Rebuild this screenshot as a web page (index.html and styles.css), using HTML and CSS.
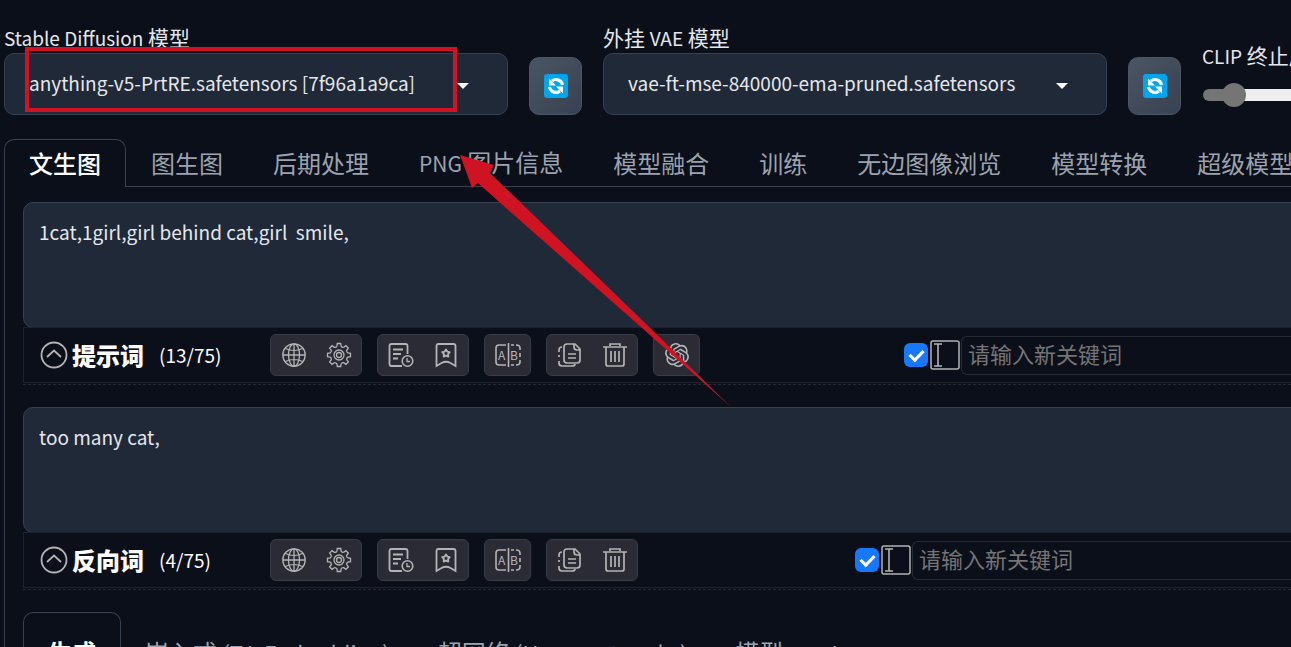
FILE: index.html
```html
<!DOCTYPE html>
<html lang="zh"><head><meta charset="utf-8"><title>Stable Diffusion</title><link rel="stylesheet" href="styles.css"></head>
<body>
<svg class="defs" aria-hidden="true">
<symbol id="refresh" viewBox="0 0 24 24"><rect width="24" height="24" rx="3" fill="#00a6ed"/><g fill="none" stroke="#fff" stroke-width="3"><path d="M18.500 11A6.500 6.500 0 0 0 8 7M5.500 13A6.500 6.500 0 0 0 16 17"/></g><path fill="#fff" d="M5 4.500V11.500h7zM19 19.500V12.500h-7z"/></symbol>
<symbol id="up" viewBox="0 0 28 28"><circle cx="14" cy="14" r="12.500"/><path d="m7 16 7-6.500 7 6.500"/></symbol>
<symbol id="globe" viewBox="0 0 26 26"><circle cx="13" cy="13" r="11.200"/><ellipse cx="13" cy="13" rx="5.500" ry="11.200"/><path d="M13 2v22M2 13h22M4.500 6.500c5 2.500 12 2.500 17 0M4.500 19.500c5-2.500 12-2.500 17 0"/></symbol>
<symbol id="gear" viewBox="0 0 26 26"><path id="tooth" d="M10.900 4.200 11.300 1.500H14.700L15.100 4.200Q16.200 5.800 17.740 5.300"/><use href="#tooth" transform="rotate(45 13 13)"/><use href="#tooth" transform="rotate(90 13 13)"/><use href="#tooth" transform="rotate(135 13 13)"/><use href="#tooth" transform="rotate(180 13 13)"/><use href="#tooth" transform="rotate(225 13 13)"/><use href="#tooth" transform="rotate(270 13 13)"/><use href="#tooth" transform="rotate(315 13 13)"/><circle cx="13" cy="13" r="5"/><circle cx="13" cy="13" r="2.500"/></symbol>
<symbol id="history" viewBox="0 0 26 26"><path stroke-width="1.800" d="M14 24H3.500Q1.500 24 1.500 22V4q0-2 2-2h14q2 0 2 2v8M5 7.500h10M5 12h8M5 16.500h5"/><circle cx="19.500" cy="19" r="5.300" stroke-width="1.600"/><path d="M19 16v3.500h3"/></symbol>
<symbol id="bookmark" viewBox="0 0 26 26"><path stroke-width="1.800" d="M3.500 24V4q0-2 2-2h15q2 0 2 2v20l-5-3q-4.500-2.500-9 0z"/><path stroke-width="1.900" stroke-linejoin="round" d="m13 7.500 1.300 2.100 2.400.5-1.600 1.900.2 2.500-2.300-.9-2.300.9.200-2.500-1.600-1.900 2.400-.5z"/></symbol>
<symbol id="compare" viewBox="0 0 26 26"><path stroke-width="1.600" d="M11 3H4Q1 3 1 6v14q0 3 3 3h7M13.500 1v24M16 3h3m2 0q4 0 4 3v2m0 3v4m0 3v2q0 3-4 3m-2 0h-3"/><text x="3" y="18">A</text><text x="15" y="18">B</text></symbol>
<symbol id="copy" viewBox="0 0 26 26"><path stroke-width="1.700" d="M10 2h8l5 5v11q0 3-3 3H10q-3 0-3-3V5q0-3 3-3zM17 2v3q0 3 3 3h3M11 12h8M11 16h8M5 5Q2 5 2 8v2m0 3v2m0 4v2q0 3 3 3h10q3 0 3-2"/></symbol>
<symbol id="trash" viewBox="0 0 26 26"><path stroke-width="1.700" d="M1 5h24M8 4V2h10v2M4 5v17q0 2 2 2h14q2 0 2-2V5M9 9v11M13 9v11M17 9v11"/></symbol>
<symbol id="knot" viewBox="-1 -1 26 26"><path fill="#b4b4b4" stroke="none" d="M22.2819 9.8211a5.9847 5.9847 0 0 0-.5157-4.9108 6.0462 6.0462 0 0 0-6.5098-2.9A6.0651 6.0651 0 0 0 4.9807 4.1818a5.9847 5.9847 0 0 0-3.9977 2.9 6.0462 6.0462 0 0 0 .7427 7.0966 5.98 5.98 0 0 0 .511 4.9107 6.051 6.051 0 0 0 6.5146 2.9001A5.9847 5.9847 0 0 0 13.2599 24a6.0557 6.0557 0 0 0 5.7718-4.2058 5.9894 5.9894 0 0 0 3.9977-2.9001 6.0557 6.0557 0 0 0-.7475-7.0729zm-9.022 12.6081a4.4755 4.4755 0 0 1-2.8764-1.0408l.1419-.0804 4.7783-2.7582a.7948.7948 0 0 0 .3927-.6813v-6.7369l2.02 1.1686a.071.071 0 0 1 .038.052v5.5826a4.504 4.504 0 0 1-4.4945 4.4944zm-9.6607-4.1254a4.4708 4.4708 0 0 1-.5346-3.0137l.142.0852 4.783 2.7582a.7712.7712 0 0 0 .7806 0l5.8428-3.3685v2.3324a.0804.0804 0 0 1-.0332.0615L9.74 19.9502a4.4992 4.4992 0 0 1-6.1408-1.6464zM2.3408 7.8956a4.485 4.485 0 0 1 2.3655-1.9728V11.6a.7664.7664 0 0 0 .3879.6765l5.8144 3.3543-2.0201 1.1685a.0757.0757 0 0 1-.071 0l-4.8303-2.7865A4.504 4.504 0 0 1 2.3408 7.872zm16.5963 3.8558L13.1038 8.364 15.1192 7.2a.0757.0757 0 0 1 .071 0l4.8303 2.7913a4.4944 4.4944 0 0 1-.6765 8.1042v-5.6772a.79.79 0 0 0-.407-.667zm2.0107-3.0231l-.142-.0852-4.7735-2.7818a.7759.7759 0 0 0-.7854 0L9.409 9.2297V6.8974a.0662.0662 0 0 1 .0284-.0615l4.8303-2.7866a4.4992 4.4992 0 0 1 6.6802 4.66zM8.3065 12.863l-2.02-1.1638a.0804.0804 0 0 1-.038-.0567V6.0742a4.4992 4.4992 0 0 1 7.3757-3.4537l-.142.0805L8.704 5.459a.7948.7948 0 0 0-.3927.6813zm1.0976-2.3654l2.602-1.4998 2.6069 1.4998v2.9994l-2.5974 1.4997-2.6067-1.4997Z"/></symbol>
<symbol id="cursor" viewBox="0 0 30 30"><rect x="1" y="1" width="28" height="28" rx="2" stroke-width="1.500"/><path stroke-width="1.600" d="M4 4h8M4 26h8M8 4v22"/></symbol>
</svg>
<main class="app">
<section class="settings">
<div class="field"><label for="model"><span class="latin">Stable Diffusion</span> 模型</label><div class="picker"><select id="model"><option>anything-v5-PrtRE.safetensors [7f96a1a9ca]</option></select></div></div>
<button class="refresh" aria-label="刷新模型"><svg><use href="#refresh"/></svg></button>
<div class="field"><label for="vae">外挂 <span class="latin">VAE</span> 模型</label><div class="picker"><select id="vae"><option>vae-ft-mse-840000-ema-pruned.safetensors</option></select></div></div>
<button class="refresh" aria-label="刷新 VAE"><svg><use href="#refresh"/></svg></button>
<div class="clip"><label for="clip"><span class="latin">CLIP</span> 终止层数</label><input id="clip" type="range" min="1" max="12" value="2"></div>
</section>
<nav class="tabs"><button class="active">文生图</button><button>图生图</button><button>后期处理</button><button><span class="latin">PNG</span> 图片信息</button><button>模型融合</button><button>训练</button><button>无边图像浏览</button><button>模型转换</button><button>超级模型融合</button></nav>
<section class="panel">
<div class="prompt"><textarea aria-label="提示词">1cat,1girl,girl behind cat,girl  smile,</textarea>
<div class="bar"><button class="fold" aria-label="收起提示词"><svg><use href="#up"/></svg></button><h2>提示词</h2><span class="count">(13/75)</span>
<div class="tools"><div><button aria-label="语言"><svg><use href="#globe"/></svg></button><button aria-label="设置"><svg><use href="#gear"/></svg></button></div><div><button aria-label="历史"><svg><use href="#history"/></svg></button><button aria-label="收藏"><svg><use href="#bookmark"/></svg></button></div><div><button aria-label="翻译"><svg><use href="#compare"/></svg></button></div><div><button aria-label="复制"><svg><use href="#copy"/></svg></button><button aria-label="删除"><svg><use href="#trash"/></svg></button></div><div><button aria-label="ChatGPT"><svg><use href="#knot"/></svg></button></div></div>
<div class="entry"><input type="checkbox" checked aria-label="启用输入"><svg><use href="#cursor"/></svg><input type="text" aria-label="新关键词" placeholder="请输入新关键词"></div></div></div>
<div class="prompt"><textarea aria-label="反向词">too many cat,</textarea>
<div class="bar"><button class="fold" aria-label="收起反向词"><svg><use href="#up"/></svg></button><h2>反向词</h2><span class="count">(4/75)</span>
<div class="tools"><div><button aria-label="语言"><svg><use href="#globe"/></svg></button><button aria-label="设置"><svg><use href="#gear"/></svg></button></div><div><button aria-label="历史"><svg><use href="#history"/></svg></button><button aria-label="收藏"><svg><use href="#bookmark"/></svg></button></div><div><button aria-label="翻译"><svg><use href="#compare"/></svg></button></div><div><button aria-label="复制"><svg><use href="#copy"/></svg></button><button aria-label="删除"><svg><use href="#trash"/></svg></button></div></div>
<div class="entry wide"><input type="checkbox" checked aria-label="启用输入"><svg><use href="#cursor"/></svg><input type="text" aria-label="新关键词" placeholder="请输入新关键词"></div></div></div>
<nav class="tabs sub"><button class="active">生成</button><button>嵌入式 <span class="latin">(T.I. Embedding)</span></button><button>超网络 <span class="latin">(Hypernetworks)</span></button><button>模型</button><button><span class="latin">Lora</span></button></nav>
</section>
<div class="highlight"></div>
<svg class="arrow" viewBox="0 0 280 260"><path fill="#cf1322" d="M0 0 34 10 30 18 58 45 182 165 271 252 173 165 37 45 18 28 12 33z"/></svg>
</main></body></html>
```
FILE: styles.css
```css
* { box-sizing: border-box; }
body { margin: 0; background: #0b0f19; color: #e5e7eb; font: 21px/30px "Noto Sans CJK SC", sans-serif; }
button, input, textarea, select { font: inherit; color: inherit; margin: 0; }
button { padding: 0; border: 0; background: none; }
svg { display: block; fill: none; stroke: #b4b4b4; stroke-width: 1.3; }
svg text { font: 12px "Noto Sans CJK SC", sans-serif; fill: #b4b4b4; stroke: none; }
.defs { position: absolute; width: 0; height: 0; }
.app { position: relative; height: 100vh; overflow: hidden; padding: 22px 0 0 4px; }
.latin { font-size: 19px; }
.settings { display: flex; align-items: flex-end; gap: 21px; }
.field { flex: 1; }
.field label { display: block; }
.picker { position: relative; }
.picker::after { content: ""; position: absolute; right: 39px; top: 30px; border: 6px solid transparent; border-top-color: #fff; border-bottom: 0; }
select { display: block; appearance: none; width: 100%; height: 62px; padding: 0 60px 2px 24px; border: 1px solid #374151; border-radius: 10px; background: #1f2937; }
.picker select, textarea, .count { font-size: 19px; }
.refresh { display: grid; place-items: center; width: 53px; height: 58px; border: 1px solid #4b5563; border-radius: 10px; background: linear-gradient(135deg, #4b5563, #374151); }
.refresh svg { width: 24px; height: 24px; stroke: none; }
.clip { width: 89px; align-self: flex-start; padding-top: 18px; white-space: nowrap; }
.clip label { display: block; }
.clip input { display: block; appearance: none; width: 233px; height: 12px; margin: 18px 0 0 1px; border-radius: 6px; background: linear-gradient(90deg, #757575 31px, #efefef 31px); }
.clip input::-webkit-slider-thumb { appearance: none; width: 24px; height: 24px; border-radius: 50%; background: #757575; }
.tabs { display: flex; margin-top: 24px; font-size: 24px; border-bottom: 1px solid #374151; }
.tabs button { flex: none; height: 48px; padding: 0 24px 2px; margin-bottom: -1px; border: 1px solid transparent; border-bottom: 0; border-radius: 10px 10px 0 0; color: #9ca3af; white-space: nowrap; }
.tabs .active { border-color: #374151; background: #0b0f19; color: #fff; font-weight: 500; }
.tabs .latin { font-size: 21px; }
.tabs.sub { margin-top: 0; }
.tabs.sub button { height: 78px; padding: 0 23px; }
.tabs.sub .active { padding: 0 24px; font-weight: 700; }
.tabs.sub .latin { font-size: 22px; }
.panel { border-left: 1px solid #374151; padding: 15px 0 0 18px; }
.prompt { margin-bottom: 22px; border-bottom: 1px dashed #252a35; padding-bottom: 1px; }
textarea { display: block; width: calc(100% + 20px); height: 126px; padding: 14px 15px; border: 1px solid #374151; border-radius: 10px; background: #1f2937; resize: none; }
.bar { display: flex; align-items: center; height: 56px; margin-top: -1px; padding-left: 16px; border: 1px solid #1e222d; border-right: 0; }
.fold svg { width: 28px; height: 28px; stroke-width: 1.8; }
h2 { margin: 0 15px 0 4px; font-size: 24px; font-weight: 900; color: #fff; }
.count { width: 111px; color: #fff; }
.tools { display: flex; gap: 15px; }
.tools div { display: flex; height: 42px; border: 1px solid #393b45; border-radius: 6px; background: #2a2b35; }
.tools button { display: grid; place-items: center; width: 45px; }
.tools svg { width: 26px; height: 26px; }
.entry { display: flex; align-items: center; flex: none; width: 387px; margin-left: auto; }
.entry.wide { width: 436px; }
.entry > svg { width: 30px; height: 30px; margin: 0 1px 0 2px; }
[type="checkbox"] { appearance: none; flex: none; width: 24px; height: 24px; border-radius: 6px; background: #1677ff; display: grid; place-items: center; }
[type="checkbox"]::before { content: ""; width: 6px; height: 11px; border: solid #fff; border-width: 0 3px 3px 0; transform: translateY(-1px) rotate(45deg); }
[type="text"] { flex: 1; min-width: 0; height: 39px; padding: 0 6px 4px; border: 1px solid #252a35; border-right: 0; border-radius: 6px 0 0 6px; background: transparent; outline: none; font-size: 22px; }
::placeholder { color: #757575; opacity: 1; }
.highlight { position: absolute; left: 25px; top: 47px; width: 432px; height: 65px; border: 4px solid #cf1322; }
.arrow { position: absolute; left: 460px; top: 155px; width: 280px; height: 260px; stroke: none; }
```
